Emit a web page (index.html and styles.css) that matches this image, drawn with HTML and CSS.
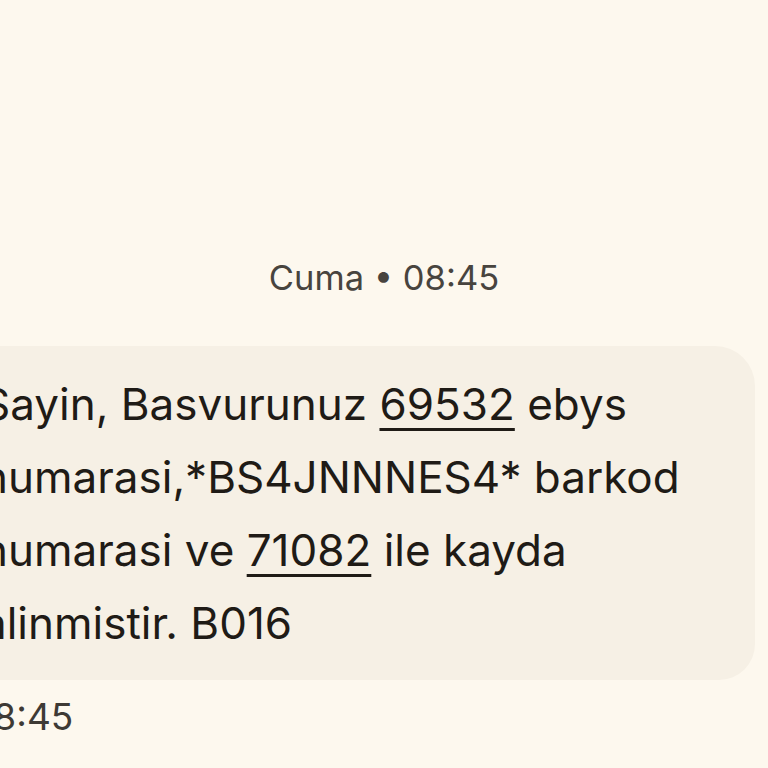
FILE: index.html
```html
<!DOCTYPE html>
<html>
<head>
<meta charset="utf-8">
<link rel="stylesheet" href="styles.css">
</head>
<body>
<div class="screen">
  <div class="day">Cuma • 08:45</div>
  <div class="bubble">
    <p class="msg">Sayin, Basvurunuz <span class="link">69532</span> ebys numarasi,*BS4JNNNES4* barkod numarasi ve <span class="link">71082</span> ile kayda alinmistir. B016</p>
  </div>
  <div class="time">08:45</div>
</div>
</body>
</html>
```
FILE: styles.css
```css
html, body {
  margin: 0;
  padding: 0;
  background: #fdf8ee;
  overflow: hidden;
}
.screen {
  width: 768px;
  height: 768px;
  font-family: Inter, "Noto Sans", sans-serif;
  color: #1f1b16;
}
.day {
  padding-top: 256px;
  text-align: center;
  font-size: 34.5px;
  line-height: 44px;
  color: #48443e;
}
.bubble {
  margin-top: 46px;
  margin-left: -60px;
  width: 815px;
  height: 334px;
  box-sizing: border-box;
  background: #f6f0e5;
  border-radius: 44px 40px 36px 44px;
  padding: 22px 60px 0 42px;
}
.msg {
  margin: 0;
  font-size: 44px;
  line-height: 73px;
  width: 720px;
}
.link {
  text-decoration: underline;
  text-decoration-thickness: 3px;
  text-underline-offset: 8px;
}
.time {
  margin-left: -30px;
  margin-top: 14px;
  font-size: 37px;
  line-height: 46px;
  color: #3e3a35;
}
```
